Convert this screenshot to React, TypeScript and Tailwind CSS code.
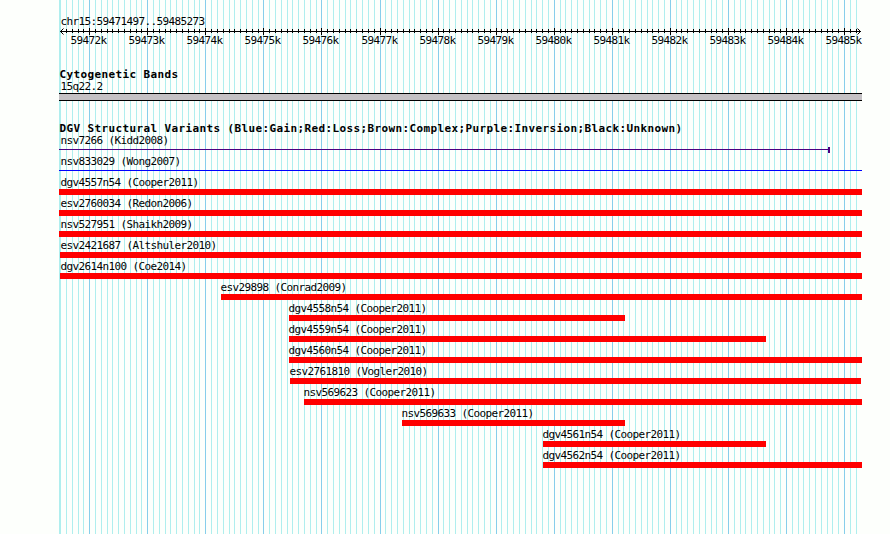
import { clsx } from 'clsx';

interface Variant {
  name: string;
  start: number;
  end: number;
  kind: 'loss' | 'gain' | 'mixed';
}

const LEFT = 59;
const FIRST_BASE = 59471497;
const LAST_BASE = 59485273;
const PX_PER_BASE = 800 / (LAST_BASE - FIRST_BASE);

const toX = (base: number) => Math.round(59.95 + (base - FIRST_BASE) * PX_PER_BASE);

const ticks: { base: number; x: number; major: boolean }[] = [];
for (let base = 59471500; base <= LAST_BASE - 50; base += 100) {
  ticks.push({ base, x: toX(base), major: base % 1000 === 0 });
}
const majorTicks = ticks.filter((t) => t.major);

const variants: Variant[] = [
  { name: 'nsv7266 (Kidd2008)', start: 59, end: 830, kind: 'mixed' },
  { name: 'nsv833029 (Wong2007)', start: 59, end: 862, kind: 'gain' },
  { name: 'dgv4557n54 (Cooper2011)', start: 59, end: 862, kind: 'loss' },
  { name: 'esv2760034 (Redon2006)', start: 59, end: 862, kind: 'loss' },
  { name: 'nsv527951 (Shaikh2009)', start: 59, end: 862, kind: 'loss' },
  { name: 'esv2421687 (Altshuler2010)', start: 60, end: 861, kind: 'loss' },
  { name: 'dgv2614n100 (Coe2014)', start: 60, end: 862, kind: 'loss' },
  { name: 'esv29898 (Conrad2009)', start: 221, end: 862, kind: 'loss' },
  { name: 'dgv4558n54 (Cooper2011)', start: 289, end: 625, kind: 'loss' },
  { name: 'dgv4559n54 (Cooper2011)', start: 289, end: 766, kind: 'loss' },
  { name: 'dgv4560n54 (Cooper2011)', start: 289, end: 862, kind: 'loss' },
  { name: 'esv2761810 (Vogler2010)', start: 290, end: 861, kind: 'loss' },
  { name: 'nsv569623 (Cooper2011)', start: 304, end: 862, kind: 'loss' },
  { name: 'nsv569633 (Cooper2011)', start: 402, end: 625, kind: 'loss' },
  { name: 'dgv4561n54 (Cooper2011)', start: 543, end: 766, kind: 'loss' },
  { name: 'dgv4562n54 (Cooper2011)', start: 543, end: 862, kind: 'loss' },
];

const labelClass =
  "font-['DejaVu_Sans_Mono',monospace] text-[11px] tracking-[-0.622px] leading-[13px] h-[13px] whitespace-pre";
const titleClass =
  "font-['DejaVu_Sans_Mono',monospace] font-bold text-[11px] tracking-[0.378px] leading-[13px] h-[13px] whitespace-pre";

function Grid() {
  return (
    <svg className="absolute inset-0" width="890" height="534" shapeRendering="crispEdges">
      <rect x={LEFT} y="0" width="1" height="534" fill="#afeeee" />
      {ticks.map((t) => (
        <rect key={t.base} x={t.x} y="0" width="1" height="534" fill={t.major ? '#87ceeb' : '#afeeee'} />
      ))}
    </svg>
  );
}

function Ruler() {
  return (
    <svg className="block" width="890" height="20" viewBox="0 28 890 20">
      <g shapeRendering="crispEdges">
        <rect x="60" y="31" width="801" height="1" />
        {ticks.slice(1).map((t) => (
          <rect key={t.base} x={t.x} y={t.major ? 28 : 29} width="1" height={t.major ? 7 : 4} />
        ))}
      </g>
      <path d="M63.5 28.5L60.5 31.5L63.5 34.5M857.5 28.5L860.5 31.5L857.5 34.5" fill="none" stroke="black" />
      {majorTicks.map((t) => (
        <text
          key={t.base}
          x={t.x - 18.5}
          y="44"
          className="font-['DejaVu_Sans_Mono',monospace] text-[11px] tracking-[-0.622px]"
        >
          {t.base / 1000}k
        </text>
      ))}
    </svg>
  );
}

function VariantRow({ variant }: { variant: Variant }) {
  const { name, start, end, kind } = variant;
  return (
    <div className="h-[21px]" style={{ paddingLeft: start }}>
      <div className={clsx(labelClass, start === LEFT ? 'pl-[1.5px]' : start === 60 ? 'pl-[0.5px]' : '-ml-[0.5px]')}>
        {name}
      </div>
      <div className="flex h-1.5 items-start" style={{ width: end - start }}>
        {kind === 'loss' && <div className="h-1.5 w-full bg-[#ff0000]" />}
        {kind === 'gain' && <div className="mt-0.5 h-px w-full bg-[#0000ff]" />}
        {kind === 'mixed' && (
          <>
            <div className="mt-0.5 h-px flex-1 bg-[#4b0082]" />
            <div className="h-1.5 w-0.5 bg-[#4b0082]" />
          </>
        )}
      </div>
    </div>
  );
}

export default function App() {
  return (
    <div className="relative h-[534px] w-[890px] overflow-hidden bg-[#fdfffc] text-black">
      <Grid />
      <div className="relative flex flex-col pt-[15px]">
        <div className={clsx(labelClass, 'pl-[60.5px]')}>chr15:59471497..59485273</div>
        <Ruler />

        <section className="pt-5">
          <h2 className={clsx(titleClass, 'pl-[59.5px]')}>Cytogenetic Bands</h2>
          <div className={clsx(labelClass, '-mt-px pl-[60.5px]')}>15q22.2</div>
          <div className="ml-[59px] h-2 w-[803px] border-y border-black bg-[#c4c1c4]" />
        </section>

        <section className="pt-[21px]">
          <h2 className={clsx(titleClass, 'pl-[59.5px]')}>
            DGV Structural Variants (Blue:Gain;Red:Loss;Brown:Complex;Purple:Inversion;Black:Unknown)
          </h2>
          <div className="-mt-px">
            {variants.map((v) => (
              <VariantRow key={v.name} variant={v} />
            ))}
          </div>
        </section>
      </div>
    </div>
  );
}
